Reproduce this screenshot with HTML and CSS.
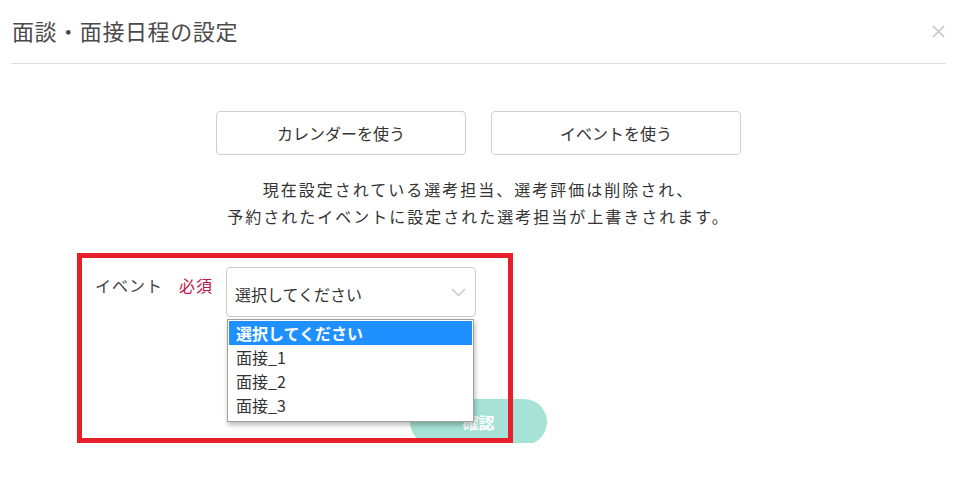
FILE: index.html
```html
<!DOCTYPE html>
<html lang="ja">
<head>
<meta charset="utf-8">
<title>面談・面接日程の設定</title>
<link rel="stylesheet" href="styles.css">
</head>
<body>
<div class="modal">
  <header class="modal-header">
    <h1 class="modal-title">面談・面接日程の設定</h1>
    <button class="close" aria-label="閉じる">
      <svg width="13" height="13" viewBox="0 0 13 13"><path d="M1 1L12 12M12 1L1 12" stroke="#c4c4c4" stroke-width="1.6" fill="none"/></svg>
    </button>
  </header>
  <main class="modal-body">
    <div class="mode-buttons">
      <button class="mode-btn">カレンダーを使う</button>
      <button class="mode-btn">イベントを使う</button>
    </div>
    <p class="notice">現在設定されている選考担当、選考評価は削除され、<br>予約されたイベントに設定された選考担当が上書きされます。</p>
    <div class="form-wrap">
      <div class="field-row">
        <span class="field-label">イベント</span>
        <span class="required">必須</span>
        <div class="select-wrap">
          <div class="select-box">
            <span class="select-text">選択してください</span>
            <svg class="chevron" width="15" height="9" viewBox="0 0 15 9"><path d="M1 1L7.5 7.5L14 1" stroke="#c8c8c8" stroke-width="1.5" fill="none"/></svg>
          </div>
          <ul class="dropdown">
            <li class="option selected">選択してください</li>
            <li class="option">面接_1</li>
            <li class="option">面接_2</li>
            <li class="option">面接_3</li>
          </ul>
        </div>
      </div>
      <div class="actions">
        <button class="confirm">確認</button>
      </div>
      <div class="annotation"></div>
    </div>
  </main>
</div>
</body>
</html>
```

FILE: styles.css
```css
* { box-sizing: border-box; }
body {
  margin: 0;
  background: #fff;
  font-family: "Noto Sans CJK JP", "Noto Sans", sans-serif;
  color: #333;
}
.modal {
  width: 935px;
  margin-left: 11px;
}
.modal-header {
  height: 64px;
  border-bottom: 1px solid #dedede;
  display: flex;
  align-items: flex-start;
  justify-content: space-between;
}
.modal-title {
  margin: 14px 0 0 1px;
  font-size: 22px;
  font-weight: 400;
  letter-spacing: 0.6px;
  line-height: 32px;
  color: #4a4a4a;
}
.close {
  margin-top: 25px;
  margin-right: 1px;
  padding: 0;
  border: 0;
  background: none;
  width: 13px;
  height: 13px;
  display: flex;
}
.modal-body {
  padding-top: 47px;
}
.mode-buttons {
  display: flex;
  justify-content: center;
  gap: 25px;
}
.mode-btn {
  width: 250px;
  height: 44px;
  border: 1px solid #cfcfcf;
  border-radius: 4px;
  background: #fff;
  font-family: inherit;
  font-size: 16px;
  color: #333;
}
.notice {
  margin: 21px 0 0;
  text-align: center;
  font-size: 16px;
  letter-spacing: 2px;
  line-height: 27px;
  color: #333;
}
.form-wrap {
  position: relative;
  margin: 23px 0 0 66px;
  width: 436px;
  height: 190px;
}
.field-row {
  display: flex;
  align-items: flex-start;
  padding: 14px 0 0 18px;
}
.field-label {
  font-size: 16px;
  letter-spacing: 1px;
  line-height: 22px;
  margin-top: 7px;
  color: #444;
}
.required {
  font-size: 16px;
  line-height: 22px;
  margin: 7px 0 0 16px;
  color: #c3184b;
  letter-spacing: 1px;
}
.select-wrap {
  position: relative;
  margin-left: 13px;
}
.select-box {
  width: 250px;
  height: 50px;
  border: 1px solid #cccccc;
  border-radius: 4px;
  display: flex;
  align-items: center;
  justify-content: space-between;
  padding: 4px 9px 0 8px;
}
.select-text {
  font-size: 16px;
  color: #333;
}
.chevron { margin-bottom: 3px; }
.dropdown {
  position: absolute;
  z-index: 3;
  top: 52px;
  left: 1px;
  width: 247px;
  margin: 0;
  padding: 1px 1px 4px;
  list-style: none;
  background: #fff;
  border: 1px solid #a0a0a0;
  box-shadow: 1px 3px 5px rgba(0, 0, 0, 0.28);
}
.option {
  height: 24px;
  line-height: 24px;
  padding-left: 7px;
  font-size: 16px;
  color: #333;
}
.option.selected {
  background: #1e90ff;
  color: #fff;
  font-weight: 700;
}
.actions {
  padding: 82px 0 0 333px;
}
.confirm {
  width: 137px;
  height: 46px;
  border: 0;
  border-radius: 23px;
  background: #a6e3d6;
  color: #fff;
  font-family: inherit;
  font-size: 16px;
  font-weight: 700;
}
.annotation {
  position: absolute;
  z-index: 2;
  left: 0;
  top: 0;
  width: 436px;
  height: 190px;
  border: 5px solid #e5202a;
  pointer-events: none;
}
```
